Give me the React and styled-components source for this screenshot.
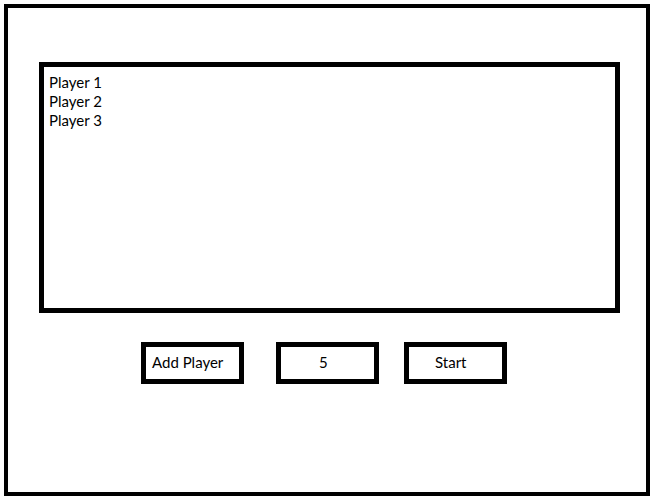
import React from "react";
import styled, { createGlobalStyle } from "styled-components";

const Global = createGlobalStyle`
  body {
    margin: 0;
    background: #ffffff;
    font-family: Lato, "Open Sans", sans-serif;
    color: #000000;
  }
`;

export default function App() {
  const players = ["Player 1", "Player 2", "Player 3"];

  return (
    <>
      <Global />
      <Frame>
        <PlayerList>
          {players.map((p) => (
            <PlayerRow key={p}>{p}</PlayerRow>
          ))}
        </PlayerList>
        <Controls>
          <BoxButton $indent={6}>Add Player</BoxButton>
          <BoxButton $gap={32} $indent={38}>5</BoxButton>
          <BoxButton $gap={25} $indent={26}>Start</BoxButton>
        </Controls>
      </Frame>
    </>
  );
}

const Frame = styled.div`
  box-sizing: border-box;
  margin: 4px 0 0 4px;
  width: 646px;
  height: 492px;
  border: 4px solid #000;
  padding: 54px 0 0 31px;
`;

const PlayerList = styled.div`
  box-sizing: border-box;
  width: 581px;
  height: 251px;
  border: 5px solid #000;
  padding: 6px 0 0 5px;
  display: flex;
  flex-direction: column;
`;

const PlayerRow = styled.div`
  font-size: 15px;
  line-height: 19px;
`;

const Controls = styled.div`
  display: flex;
  margin: 29px 0 0 102px;
`;

const BoxButton = styled.div`
  box-sizing: border-box;
  width: 103px;
  height: 42px;
  margin-left: ${(p) => p.$gap || 0}px;
  border: 5px solid #000;
  padding: 0 0 2px ${(p) => p.$indent}px;
  display: flex;
  align-items: center;
  font-size: 15px;
`;
